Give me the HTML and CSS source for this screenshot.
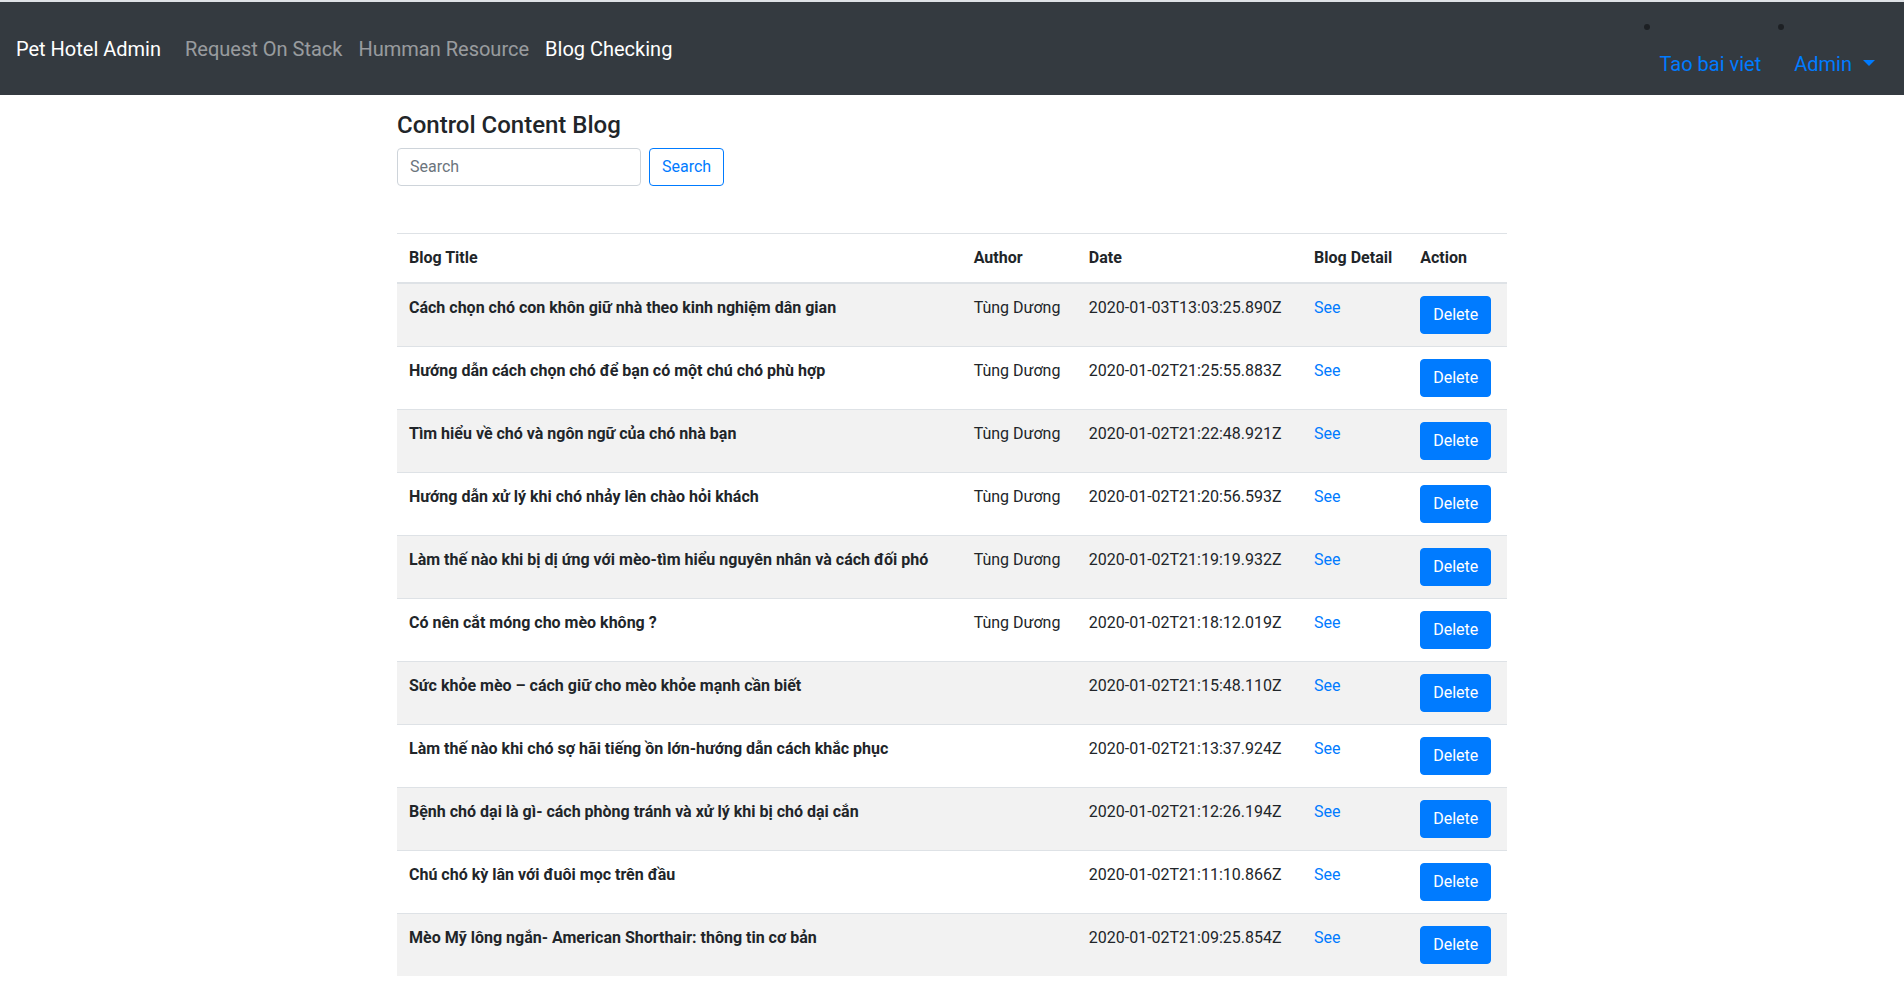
FILE: index.html
```html
<!DOCTYPE html>
<html lang="vi">
<head>
<meta charset="utf-8">
<title>Pet Hotel Admin</title>
<link rel="stylesheet" href="styles.css">
</head>
<body>
<nav class="navbar">
  <div class="nav-left">
    <a class="brand" href="#">Pet Hotel Admin</a>
    <a class="nav-link" href="#">Request On Stack</a>
    <a class="nav-link" href="#">Humman Resource</a>
    <a class="nav-link active" href="#">Blog Checking</a>
  </div>
  <ul class="nav-right">
    <li class="right-item"><a class="right-link" href="#">Tao bai viet</a></li>
    <li class="right-item"><a class="right-link dropdown" href="#">Admin</a></li>
  </ul>
</nav>

<main class="container">
  <h4 class="page-title">Control Content Blog</h4>
  <form class="search-form">
    <input class="search-input" type="text" placeholder="Search">
    <button class="btn btn-outline" type="button">Search</button>
  </form>

  <table class="table">
    <thead>
      <tr>
        <th>Blog Title</th>
        <th>Author</th>
        <th>Date</th>
        <th>Blog Detail</th>
        <th>Action</th>
      </tr>
    </thead>
    <tbody>
      <tr><th class="row-title">Cách chọn chó con khôn giữ nhà theo kinh nghiệm dân gian</th><td>Tùng Dương</td><td>2020-01-03T13:03:25.890Z</td><td><a class="see" href="#">See</a></td><td><button class="btn btn-primary" type="button">Delete</button></td></tr>
      <tr><th class="row-title">Hướng dẫn cách chọn chó để bạn có một chú chó phù hợp</th><td>Tùng Dương</td><td>2020-01-02T21:25:55.883Z</td><td><a class="see" href="#">See</a></td><td><button class="btn btn-primary" type="button">Delete</button></td></tr>
      <tr><th class="row-title">Tìm hiểu về chó và ngôn ngữ của chó nhà bạn</th><td>Tùng Dương</td><td>2020-01-02T21:22:48.921Z</td><td><a class="see" href="#">See</a></td><td><button class="btn btn-primary" type="button">Delete</button></td></tr>
      <tr><th class="row-title">Hướng dẫn xử lý khi chó nhảy lên chào hỏi khách</th><td>Tùng Dương</td><td>2020-01-02T21:20:56.593Z</td><td><a class="see" href="#">See</a></td><td><button class="btn btn-primary" type="button">Delete</button></td></tr>
      <tr><th class="row-title">Làm thế nào khi bị dị ứng với mèo-tìm hiểu nguyên nhân và cách đối phó</th><td>Tùng Dương</td><td>2020-01-02T21:19:19.932Z</td><td><a class="see" href="#">See</a></td><td><button class="btn btn-primary" type="button">Delete</button></td></tr>
      <tr><th class="row-title">Có nên cắt móng cho mèo không ?</th><td>Tùng Dương</td><td>2020-01-02T21:18:12.019Z</td><td><a class="see" href="#">See</a></td><td><button class="btn btn-primary" type="button">Delete</button></td></tr>
      <tr><th class="row-title">Sức khỏe mèo – cách giữ cho mèo khỏe mạnh cần biết</th><td></td><td>2020-01-02T21:15:48.110Z</td><td><a class="see" href="#">See</a></td><td><button class="btn btn-primary" type="button">Delete</button></td></tr>
      <tr><th class="row-title">Làm thế nào khi chó sợ hãi tiếng ồn lớn-hướng dẫn cách khắc phục</th><td></td><td>2020-01-02T21:13:37.924Z</td><td><a class="see" href="#">See</a></td><td><button class="btn btn-primary" type="button">Delete</button></td></tr>
      <tr><th class="row-title">Bệnh chó dại là gì- cách phòng tránh và xử lý khi bị chó dại cắn</th><td></td><td>2020-01-02T21:12:26.194Z</td><td><a class="see" href="#">See</a></td><td><button class="btn btn-primary" type="button">Delete</button></td></tr>
      <tr><th class="row-title">Chú chó kỳ lân với đuôi mọc trên đầu</th><td></td><td>2020-01-02T21:11:10.866Z</td><td><a class="see" href="#">See</a></td><td><button class="btn btn-primary" type="button">Delete</button></td></tr>
      <tr><th class="row-title">Mèo Mỹ lông ngắn- American Shorthair: thông tin cơ bản</th><td></td><td>2020-01-02T21:09:25.854Z</td><td><a class="see" href="#">See</a></td><td><button class="btn btn-primary" type="button">Delete</button></td></tr>
    </tbody>
  </table>
</main>
</body>
</html>
```

FILE: styles.css
```css
* { box-sizing: border-box; }

html, body {
  margin: 0;
  padding: 0;
}

body {
  font-family: Roboto, "Liberation Sans", "Noto Sans", sans-serif;
  font-size: 16px;
  line-height: 1.5;
  color: #212529;
  background: #fff;
}

a { text-decoration: none; }

/* Navbar */
.navbar {
  display: flex;
  justify-content: space-between;
  align-items: stretch;
  height: 95px;
  background: #343a40;
  border-top: 2px solid #dee2e6;
  padding: 0 16px;
}

.nav-left {
  display: flex;
  align-items: center;
}

.brand {
  color: #fff;
  font-size: 20px;
  line-height: 30px;
  margin-right: 16px;
}

.nav-link {
  color: rgba(255, 255, 255, 0.5);
  font-size: 20px;
  line-height: 30px;
  padding: 0 8px;
}

.nav-link.active {
  color: #fff;
}

.nav-right {
  list-style: none;
  margin: 0;
  padding: 22px 13px 0 0;
  display: flex;
  align-items: flex-start;
  gap: 17px;
}

.right-item {
  display: flex;
  flex-direction: column;
  padding-left: 16px;
}

.right-item::before {
  content: "";
  display: block;
  width: 6px;
  height: 6px;
  border-radius: 50%;
  background: #1d2024;
  margin-left: -16px;
  margin-bottom: 19px;
}

.right-link {
  color: #007bff;
  font-size: 20px;
  line-height: 30px;
}

.dropdown::after {
  content: "";
  display: inline-block;
  margin-left: 11px;
  vertical-align: 5px;
  border-top: 6px solid #007bff;
  border-left: 6px solid transparent;
  border-right: 6px solid transparent;
}

/* Content */
.container {
  width: 1110px;
  margin: 0 auto;
}

.page-title {
  font-size: 24px;
  font-weight: 500;
  line-height: 1.2;
  margin: 16px 0 8px;
}

.search-form {
  display: flex;
  gap: 8px;
}

.search-input {
  width: 244px;
  height: 38px;
  padding: 6px 12px;
  font-family: inherit;
  font-size: 16px;
  color: #495057;
  border: 1px solid #ced4da;
  border-radius: 4px;
  background: #fff;
}

.search-input::placeholder {
  color: #6c757d;
}

.btn {
  font-family: inherit;
  font-size: 16px;
  line-height: 24px;
  padding: 6px 12px;
  border-radius: 4px;
  border: 1px solid transparent;
  cursor: pointer;
  white-space: nowrap;
}

.btn-outline {
  color: #007bff;
  background: #fff;
  border-color: #007bff;
}

.btn-primary {
  color: #fff;
  background: #007bff;
  border-color: #007bff;
}

/* Table */
.table {
  width: 100%;
  margin-top: 47px;
  border-collapse: collapse;
  color: #212529;
}

.table th,
.table td {
  padding: 12px;
  border-top: 1px solid #dee2e6;
  vertical-align: top;
  text-align: left;
}

.table thead th {
  vertical-align: bottom;
  border-bottom: 2px solid #dee2e6;
  font-weight: 700;
}

.table tbody tr:nth-of-type(odd) {
  background: rgba(0, 0, 0, 0.05);
}

.row-title {
  font-weight: 700;
}

.see {
  color: #007bff;
}
```
